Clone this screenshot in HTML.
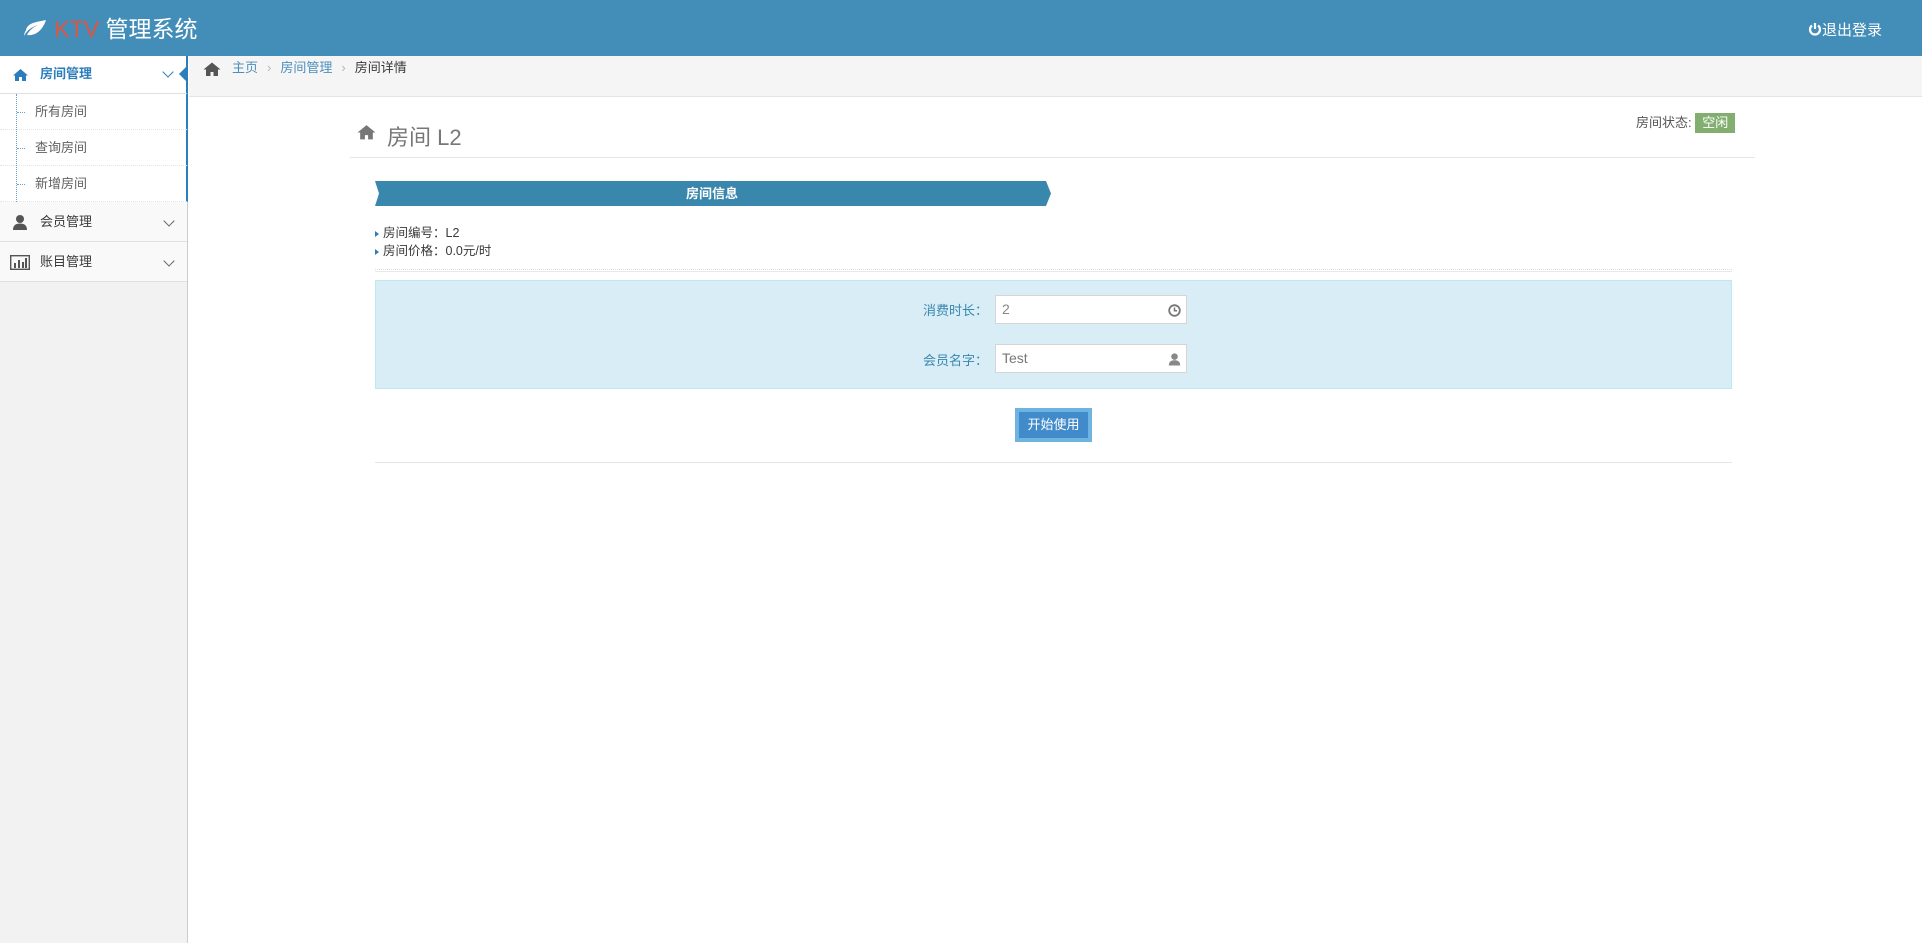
<!DOCTYPE html>
<html><head><meta charset="utf-8"><style>
*{box-sizing:border-box;margin:0;padding:0}
body{width:1922px;height:943px;overflow:hidden;background:#fff;font-family:"Liberation Sans","Noto Sans CJK SC",sans-serif;font-size:13px;color:#393939;position:relative}
.hdr{position:absolute;left:0;top:0;width:1922px;height:56px;background:#438eb9}
.logo{position:absolute;left:22px;top:10px;font-size:23px;color:#fff}
.logo .k{color:#e0533f}
.logout{position:absolute;right:40px;top:19px;color:#fff;font-size:15px}
.side{position:absolute;left:0;top:56px;width:188px;height:887px;background:#f2f2f2;border-right:1px solid #ccc}
.mi{position:absolute;left:0;width:187px;height:40px;border-bottom:1px solid #e0e0e0;background:#f9f9f9;font-size:13px;line-height:40px}
.mi span{position:absolute;left:40px}
.chev{position:absolute;right:14px;top:15px;width:8px;height:8px;border-right:1.5px solid #666;border-bottom:1.5px solid #666;transform:rotate(45deg)}
.sub{position:absolute;left:0;width:187px;height:36px;background:#fff;border-bottom:1px dotted #e4e4e4;line-height:36px;color:#616161}
.sub span{position:absolute;left:35px}
.sub i{position:absolute;left:17px;top:18px;width:8px;border-top:1px dotted #6a9ecf}
.bc{position:absolute;left:189px;top:56px;width:1733px;height:41px;background:#f5f5f5;border-bottom:1px solid #e5e5e5;line-height:24px;font-size:13px}
.bc a{color:#4c8fbd}
.sep{color:#b2b6bf;margin:0 9px}
</style></head><body>
<div class="hdr">
<div class="logo"><svg width="26" height="20" viewBox="0 0 26 20" style="vertical-align:-1px"><path d="M2 18C5 12 10 9 16 7C10 10 7 13 5 17C12 18 20 14 24 2C16 4 6 4 4 12C3 14 2 16 2 18Z" fill="#fff"/></svg> <span class="k">KTV</span> 管理系统</div>
<div class="logout"><svg width="14" height="14" viewBox="0 0 14 14" style="vertical-align:-1px"><path d="M4 3.5A5 5 0 1 0 10 3.5" stroke="#fff" stroke-width="2.2" fill="none"/><path d="M7 1V7" stroke="#fff" stroke-width="2.2"/></svg><b style="font-weight:normal">退出登录</b></div>
</div>
<div class="side">
<div class="mi" style="top:0;height:38px;line-height:36px;background:#fff;color:#2b7dbc;font-weight:bold;border-right:2px solid #2b7dbc;width:188px"><svg style="position:absolute;left:12px;top:12px" width="17" height="14" viewBox="0 0 17 14"><path d="M8.5 1L1 7.5H3V13H7V9H10V13H14V7.5H16Z" fill="#2b7dbc"/></svg><span>房间管理</span><i class="chev" style="border-color:#2b7dbc;top:12px"></i><div style="position:absolute;right:-2px;top:9px;border:9px solid transparent;border-right-color:#2b7dbc"></div></div>
<div style="position:absolute;left:16px;top:38px;height:108px;border-left:1px dotted #6a9ecf;z-index:2"></div>
<div class="sub" style="top:38px;border-right:2px solid #2b7dbc;width:188px"><i></i><span>所有房间</span></div>
<div class="sub" style="top:74px;border-right:2px solid #2b7dbc;width:188px"><i></i><span>查询房间</span></div>
<div class="sub" style="top:110px;border-right:2px solid #2b7dbc;width:188px"><i></i><span>新增房间</span></div>
<div class="mi" style="top:146px"><svg style="position:absolute;left:12px;top:12px" width="16" height="16" viewBox="0 0 16 16"><circle cx="8" cy="5" r="4" fill="#555"/><path d="M1 16C1 11 4 9.5 8 9.5S15 11 15 16Z" fill="#555"/></svg><span>会员管理</span><i class="chev"></i></div>
<div class="mi" style="top:186px"><svg style="position:absolute;left:10px;top:13px" width="20" height="15" viewBox="0 0 20 15"><rect x="0.7" y="0.7" width="18.6" height="13.6" fill="none" stroke="#555" stroke-width="1.4"/><rect x="4" y="8" width="2" height="5" fill="#555"/><rect x="8" y="5" width="2" height="8" fill="#555"/><rect x="12" y="7" width="2" height="6" fill="#555"/><rect x="15" y="3" width="2" height="10" fill="#555"/></svg><span>账目管理</span><i class="chev"></i></div>
</div>
<div class="bc"><svg style="position:absolute;left:14px;top:6px" width="18" height="14" viewBox="0 0 18 14"><path d="M9 0.5L0.5 7.5H3V14H7.5V10H10.5V14H15V7.5H17.5Z" fill="#555"/></svg><span style="position:absolute;left:43px;top:0"><a>主页</a><span class="sep">›</span><a>房间管理</a><span class="sep">›</span>房间详情</span></div>
<svg style="position:absolute;left:357px;top:124px" width="19" height="16" viewBox="0 0 18 14"><path d="M9 0.5L0.5 7.5H3V14H7.5V10H10.5V14H15V7.5H17.5Z" fill="#777"/></svg>
<div style="position:absolute;left:387px;top:120px;font-size:22px;color:#777">房间 L2</div>
<div style="position:absolute;left:1636px;top:112px;color:#555">房间状态: <span style="display:inline-block;background:#82af6f;color:#fff;padding:1px 7px;height:20px;line-height:18px">空闲</span></div>
<div style="position:absolute;left:350px;top:157px;width:1405px;border-top:1px solid #e2e8ee"></div>
<svg style="position:absolute;left:375px;top:181px" width="676" height="25"><polygon points="0,0 671,0 676,12.5 671,25 0,25 4,12.5" fill="#3a87ad"/><text x="337" y="17" text-anchor="middle" fill="#fff" font-size="13" font-weight="bold" font-family="Liberation Sans,Noto Sans CJK SC,sans-serif">房间信息</text></svg>
<div style="position:absolute;left:375px;top:224px;line-height:18px;font-size:12.5px">
<div><span style="display:inline-block;border:3.5px solid transparent;border-left:4px solid #2b7dbc;border-right:0;margin-right:4px"></span>房间编号：L2</div>
<div><span style="display:inline-block;border:3.5px solid transparent;border-left:4px solid #2b7dbc;border-right:0;margin-right:4px"></span>房间价格：0.0元/时</div>
</div>
<div style="position:absolute;left:375px;top:269px;width:1357px;border-top:1px dotted #ddd;height:3px;border-bottom:1px solid #e8e8e8"></div>
<div style="position:absolute;left:375px;top:280px;width:1357px;height:109px;background:#d9edf7;border:1px solid #bce8f1"></div>
<div style="position:absolute;left:900px;top:300px;width:88px;text-align:right;color:#3a87ad">消费时长：</div>
<div style="position:absolute;left:995px;top:295px;width:192px;height:29px;background:#fff;border:1px solid #d5d5d5;padding:5px 6px;color:#888;font-size:14px">2<svg style="position:absolute;right:5px;top:8px" width="13" height="13" viewBox="0 0 13 13"><circle cx="6.5" cy="6.5" r="5.3" fill="none" stroke="#777" stroke-width="1.8"/><path d="M6.5 3.5V6.8H9" stroke="#777" stroke-width="1.5" fill="none"/></svg></div>
<div style="position:absolute;left:900px;top:350px;width:88px;text-align:right;color:#3a87ad">会员名字：</div>
<div style="position:absolute;left:995px;top:344px;width:192px;height:29px;background:#fff;border:1px solid #d5d5d5;padding:5px 6px;color:#777;font-size:14px">Test<svg style="position:absolute;right:5px;top:7px" width="13" height="14" viewBox="0 0 16 16"><circle cx="8" cy="5" r="4" fill="#888"/><path d="M1 16C1 11 4 9.5 8 9.5S15 11 15 16Z" fill="#888"/></svg></div>
<div style="position:absolute;left:1015px;top:408px;width:77px;height:34px;background:#428bca;border:4px solid #6fb3e0;color:#fff;text-align:center;line-height:26px;font-size:13px">开始使用</div>
<div style="position:absolute;left:375px;top:462px;width:1357px;border-top:1px solid #e5e5e5"></div>
</body></html>
